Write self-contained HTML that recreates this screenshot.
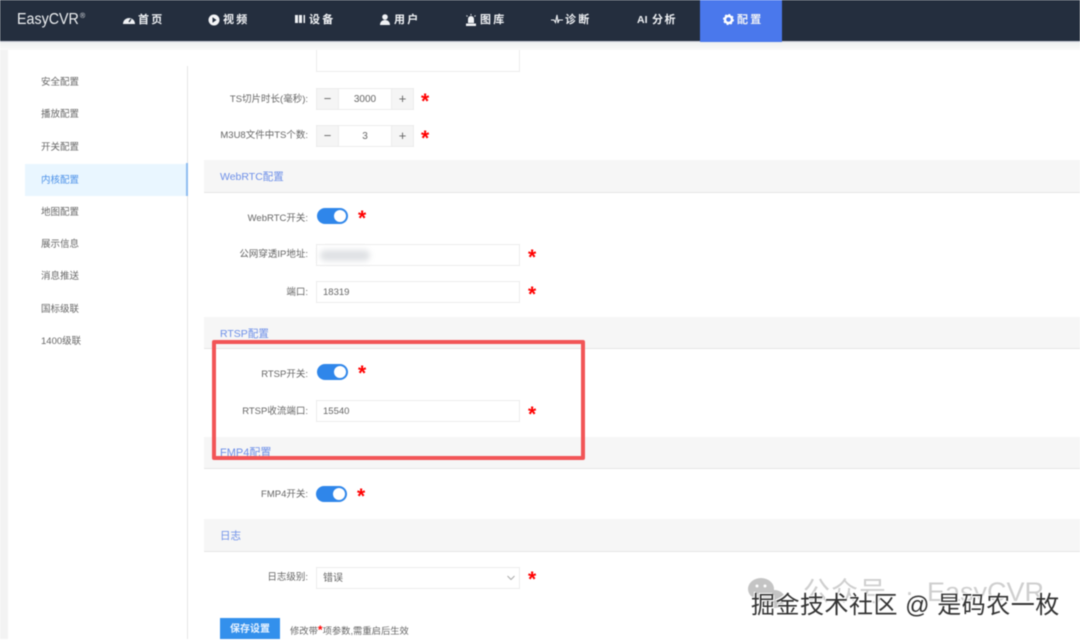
<!DOCTYPE html>
<html lang="zh"><head><meta charset="utf-8"><title>EasyCVR</title>
<style>
*{box-sizing:border-box}
html,body{margin:0;padding:0}
body{width:1080px;height:639px;overflow:hidden;position:relative;background:#fff;font-family:"Liberation Sans","Noto Sans CJK SC",sans-serif;color:#666}
#w{position:absolute;inset:0;filter:blur(.45px)}
.a,.a *{box-sizing:border-box}
.a{position:absolute;white-space:nowrap}
.hd{left:0;top:0;width:1080px;height:42px;background:#242e3e}
.nav{top:13px;height:15px;line-height:15px;font-size:11px;font-weight:bold;color:#f0f2f5;letter-spacing:2.2px}
.nav svg{position:absolute;top:1px}
.side{left:41px;font-size:9.5px;line-height:14px;color:#666}
.sec{left:204px;width:876px;background:#f6f6f6;border-bottom:1px solid #e6e6e6}
.st{left:220px;font-size:10.5px;line-height:14px;color:#6d8fe8}
.lb{right:772px;font-size:9.5px;line-height:14px;color:#666;text-align:right}
.in{left:316px;width:204px;height:22px;border:1px solid #ececec;background:#fff;font-size:9.5px;line-height:22px;padding-left:6px;color:#666}
.st1{color:#f00;font-size:21px;font-weight:bold;line-height:16px;margin-top:1px;font-family:"Liberation Sans",sans-serif}
.sw{width:31px;height:16px;border-radius:8px;background:#2f86ea}
.sw i{position:absolute;right:2px;top:2px;width:12px;height:12px;border-radius:50%;background:#fff}
.num{left:316px;width:98px;height:22px;border:1px solid #ececec;background:#fff;font-size:10px;line-height:22px;color:#666;text-align:center}
.num b{position:absolute;top:0;width:22px;height:20px;background:#f5f5f5;font-weight:normal;color:#666;font-size:13px;line-height:20px}
.num .m{left:0;border-right:1px solid #ececec}
.num .p{right:0;border-left:1px solid #ececec}
</style></head><body><div id="w">
<div class="a" style="left:0;top:42px;width:8px;height:597px;background:#f3f3f3"></div>
<div class="a" style="left:0;top:42px;width:1080px;height:8px;background:linear-gradient(#eef0f0,#fafafa)"></div>

<div class="a hd"></div>
<div class="a" style="left:0;top:41px;width:1080px;height:1px;background:#c9ccd6"></div>
<div class="a" style="left:700px;top:0;width:82px;height:42px;background:#4a78ec"></div>
<div class="a" style="left:17px;top:11px;font-size:15.5px;line-height:18px;color:#eef0f2;transform:scaleX(.92);transform-origin:left">EasyCVR</div>
<div class="a" style="left:80px;top:13px;font-size:7px;line-height:8px;color:#dfe2e6">®</div>

<div class="a nav" style="left:138px">首页<svg style="left:-16px" width="14" height="11" viewBox="0 0 14 11"><path d="M1 10a6 6 0 1 1 12 0z" fill="#f0f2f5"/><path d="M7 8l2-3" stroke="#242e3e" stroke-width="1.3"/></svg></div>
<div class="a nav" style="left:223px">视频<svg style="left:-15px" width="12" height="12" viewBox="0 0 12 12"><circle cx="6" cy="6" r="5.5" fill="#f4f5f7"/><path d="M4.500 3.300l4 2.700-4 2.700z" fill="#242e3e"/></svg></div>
<div class="a nav" style="left:309px">设备<svg style="left:-14px" width="11" height="11" viewBox="0 0 11 11"><path d="M0 1h3v8H0zM4 1h3v8H4zM8.500 1h1.500v8H8.500z" fill="#f0f2f5"/></svg></div>
<div class="a nav" style="left:394px">用户<svg style="left:-14px" width="11" height="12" viewBox="0 0 11 12"><circle cx="5" cy="3" r="2.800" fill="#f0f2f5"/><path d="M0 11c0-3 2-5 5-5s5 2 5 5z" fill="#f0f2f5"/></svg></div>
<div class="a nav" style="left:480px">图库<svg style="left:-15px" width="12" height="13" viewBox="0 0 12 13"><path d="M3 5a3 3 0 0 1 6 0v4H3zM1 9.500h10V12H1z" fill="#f0f2f5"/><path d="M6 0v1.200M1.500 1.500l1 1M10.500 1.500l-1 1" stroke="#f0f2f5"/></svg></div>
<div class="a nav" style="left:565px">诊断<svg style="left:-14px" width="12" height="10" viewBox="0 0 12 10"><path d="M0 6h3l1.500 2.500L6 1l1 8 1-3h4" fill="none" stroke="#f0f2f5" stroke-width="1.100"/></svg></div>
<div class="a nav" style="left:637px;letter-spacing:0;font-size:10.5px">AI</div>
<div class="a nav" style="left:652px;letter-spacing:1.5px">分析</div>
<div class="a nav" style="left:737px">配置<svg style="left:-14px" width="11" height="11" viewBox="0 0 11 11"><circle cx="5.500" cy="5.500" r="3.500" fill="none" stroke="#fff" stroke-width="2.400"/><circle cx="5.500" cy="5.500" r="5" fill="none" stroke="#fff" stroke-width="1" stroke-dasharray="2 1.900"/></svg></div>

<div class="a" style="left:187px;top:66px;width:1px;height:573px;background:#e6e6e6"></div>
<div class="a" style="left:25px;top:164px;width:162px;height:32px;background:#e9f6ff"></div>
<div class="a" style="left:186px;top:163px;width:2px;height:33px;background:#8fbdf0"></div>
<div class="a side" style="top:76px">安全配置</div>
<div class="a side" style="top:108px">播放配置</div>
<div class="a side" style="top:141px">开关配置</div>
<div class="a side" style="top:174px;color:#4a90e8">内核配置</div>
<div class="a side" style="top:206px">地图配置</div>
<div class="a side" style="top:238px">展示信息</div>
<div class="a side" style="top:270px">消息推送</div>
<div class="a side" style="top:303px">国标级联</div>
<div class="a side" style="top:335px">1400级联</div>

<div class="a in" style="top:50px;height:22px;border-top:0;"></div>
<div class="a lb" style="top:93px">TS切片时长(毫秒):</div>
<div class="a num" style="top:88px">3000<b class="m">−</b><b class="p">+</b></div>
<div class="a st1" style="left:421px;top:93px">*</div>
<div class="a lb" style="top:129px">M3U8文件中TS个数:</div>
<div class="a num" style="top:125px">3<b class="m">−</b><b class="p">+</b></div>
<div class="a st1" style="left:421px;top:130px">*</div>

<div class="a sec" style="top:160px;height:33px"></div>
<div class="a st" style="top:170px">WebRTC配置</div>
<div class="a lb" style="top:212px">WebRTC开关:</div>
<div class="a sw" style="left:317px;top:208px"><i></i></div>
<div class="a st1" style="left:358px;top:210px">*</div>
<div class="a lb" style="top:248px">公网穿透IP地址:</div>
<div class="a in" style="top:244px"></div>
<div class="a" style="left:320px;top:250px;width:50px;height:11px;background:#dfe1e4;border-radius:6px;filter:blur(3px)"></div>
<div class="a st1" style="left:528px;top:249px">*</div>
<div class="a lb" style="top:286px">端口:</div>
<div class="a in" style="top:281px">18319</div>
<div class="a st1" style="left:528px;top:286px">*</div>

<div class="a sec" style="top:317px;height:32px"></div>
<div class="a st" style="top:327px">RTSP配置</div>
<div class="a lb" style="top:368px">RTSP开关:</div>
<div class="a sw" style="left:317px;top:364px"><i></i></div>
<div class="a st1" style="left:358px;top:365px">*</div>
<div class="a lb" style="top:405px">RTSP收流端口:</div>
<div class="a in" style="top:400px">15540</div>
<div class="a st1" style="left:528px;top:406px">*</div>

<div class="a sec" style="top:437px;height:32px"></div>
<div class="a st" style="top:446px;font-size:11px">FMP4配置</div>
<div class="a lb" style="top:488px">FMP4开关:</div>
<div class="a sw" style="left:316px;top:486px"><i></i></div>
<div class="a st1" style="left:357px;top:488px">*</div>

<div class="a sec" style="top:519px;height:33px"></div>
<div class="a st" style="top:529px">日志</div>
<div class="a lb" style="top:571px">日志级别:</div>
<div class="a in" style="top:567px;font-size:10px">错误<svg class="a" style="left:189px;top:7px" width="10" height="6" viewBox="0 0 10 6"><path d="M1.500 1l3.500 3.500L8.500 1" fill="none" stroke="#aaa"/></svg></div>
<div class="a st1" style="left:528px;top:571px">*</div>

<div class="a" style="left:220px;top:618px;width:60px;height:21px;background:#3390ec;color:#e8f3ff;font-size:10px;font-weight:bold;line-height:23px;text-align:center">保存设置</div>
<div class="a" style="left:290px;top:625px;font-size:9.300px;line-height:13px;color:#666">修改带<span style="color:#f00;font-weight:bold;font-size:12px;line-height:10px">*</span>项参数,需重启后生效</div>

<div class="a" style="left:212px;top:340px;width:373px;height:120px;border:4px solid #f25557;border-radius:2px"></div>

<svg class="a" style="left:747px;top:575px" width="42" height="38" viewBox="0 0 42 38"><ellipse cx="14" cy="14" rx="13" ry="11" fill="#c4c4c4"/><ellipse cx="27" cy="24" rx="11" ry="9" fill="#c4c4c4"/><circle cx="10" cy="11" r="1.500" fill="#fff"/><circle cx="18" cy="11" r="1.500" fill="#fff"/></svg>
<div class="a" style="left:803px;top:577px;font-size:27px;line-height:30px;color:#cfcfcf;letter-spacing:1px">公众号</div>
<div class="a" style="left:905px;top:577px;font-size:27px;line-height:30px;color:#cfcfcf">·</div>
<div class="a" style="left:927px;top:577px;font-size:27px;line-height:30px;color:#cfcfcf">EasyCVR</div>
<div class="a" style="left:751px;top:592px;font-size:24px;line-height:28px;color:#333;letter-spacing:.5px;text-shadow:1px 1px 0 #fff,-1px -1px 0 #fff">掘金技术社区 @ 是码农一枚</div>
</div></body></html>
